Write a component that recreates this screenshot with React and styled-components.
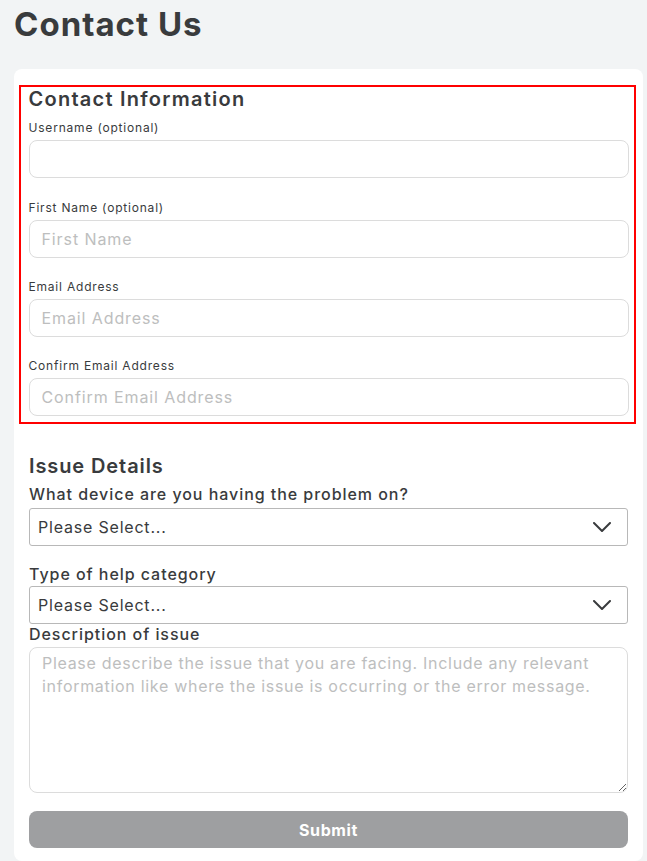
import React from "react";
import styled, { createGlobalStyle } from "styled-components";

const Global = createGlobalStyle`
  html, body { margin: 0; padding: 0; background: #f2f4f5; }
  body { font-family: Inter, "Noto Sans", sans-serif; color: #393b3d; }
  * { box-sizing: border-box; }
`;

const Page = styled.div`
  padding: 0 4px 0 14px;
`;

const Title = styled.h1`
  margin: 0;
  padding-top: 4px;
  height: 69px;
  font-size: 33px;
  font-weight: 700;
  color: #393b3d;
  line-height: 40px;
  letter-spacing: 1px;
`;

const Card = styled.div`
  background: #fff;
  border-radius: 8px;
  padding: 16px 7px 13px 5px;
  display: flex;
  flex-direction: column;
`;

const Highlight = styled.section`
  border: 2.5px solid #ff0000;
  padding: 0 5px 6px 7.5px;
  display: flex;
  flex-direction: column;
`;

const Plain = styled.section`
  padding: 0 8px 0 10px;
  display: flex;
  flex-direction: column;
`;

const Heading = styled.h2`
  margin: 0;
  margin-top: ${p => p.$top || 0}px;
  font-size: 20px;
  font-weight: 600;
  line-height: 24px;
  color: #393b3d;
  letter-spacing: ${p => p.$ls || 0.9}px;
`;

const SmallLabel = styled.label`
  display: block;
  font-size: 12px;
  line-height: 16px;
  margin-top: ${p => p.$top || 0}px;
  margin-bottom: 4px;
  color: #393b3d;
  letter-spacing: 0.8px;
`;

const Input = styled.input`
  display: block;
  width: 100%;
  height: 38px;
  border: 1px solid #dcdcdc;
  border-radius: 8px;
  padding: 0 12px;
  font: inherit;
  font-size: 16px;
  color: #393b3d;
  background: #fff;
  outline: none;
  &::placeholder { color: #bdbebe; letter-spacing: 0.9px; }
`;

const Label = styled.label`
  display: block;
  font-size: 16px;
  font-weight: 500;
  line-height: 20px;
  color: #393b3d;
  margin-top: ${p => p.$top || 0}px;
  margin-bottom: ${p => p.$bottom}px;
  letter-spacing: 0.95px;
`;

const SelectBox = styled.div`
  display: flex;
  align-items: center;
  justify-content: space-between;
  height: 38px;
  border: 1px solid #b8b8b8;
  border-radius: 3px;
  padding: 0 16px 0 8px;
  font-size: 16px;
  color: #393b3d;
  letter-spacing: 0.8px;
`;

const TextArea = styled.textarea`
  display: block;
  width: 100%;
  height: 146px;
  border: 1px solid #dcdcdc;
  border-radius: 8px;
  padding: 4px 12px;
  font: inherit;
  font-size: 16px;
  line-height: 23px;
  color: #393b3d;
  resize: vertical;
  outline: none;
  &::placeholder { color: #bdbebe; letter-spacing: 0.7px; }
`;

const Submit = styled.button`
  margin-top: 18px;
  height: 37px;
  width: 100%;
  border: none;
  border-radius: 8px;
  background: #9e9fa1;
  color: #fff;
  font: inherit;
  font-size: 16px;
  font-weight: 700;
  letter-spacing: 0.6px;
`;

const Chevron = () => (
  <svg width="18" height="10" viewBox="0 0 18 10" fill="none">
    <path d="M1 1l8 8 8-8" stroke="#393b3d" strokeWidth="2" strokeLinecap="round" strokeLinejoin="round" />
  </svg>
);

export default function App() {
  return (
    <Page>
      <Global />
      <Title>Contact Us</Title>
      <Card>
        <Highlight>
          <Heading $ls={1.25}>Contact Information</Heading>
          <SmallLabel $top={9}>Username (optional)</SmallLabel>
          <Input />
          <SmallLabel $top={22}>First Name (optional)</SmallLabel>
          <Input placeholder="First Name" />
          <SmallLabel $top={21}>Email Address</SmallLabel>
          <Input placeholder="Email Address" />
          <SmallLabel $top={21}>Confirm Email Address</SmallLabel>
          <Input placeholder="Confirm Email Address" />
        </Highlight>
        <Plain>
          <Heading $top={30}>Issue Details</Heading>
          <Label $top={6} $bottom={4}>What device are you having the problem on?</Label>
          <SelectBox>Please Select...<Chevron /></SelectBox>
          <Label $top={18} $bottom={2}>Type of help category</Label>
          <SelectBox>Please Select...<Chevron /></SelectBox>
          <Label $top={0} $bottom={3}>Description of issue</Label>
          <TextArea placeholder="Please describe the issue that you are facing. Include any relevant information like where the issue is occurring or the error message." />
          <Submit>Submit</Submit>
        </Plain>
      </Card>
    </Page>
  );
}
